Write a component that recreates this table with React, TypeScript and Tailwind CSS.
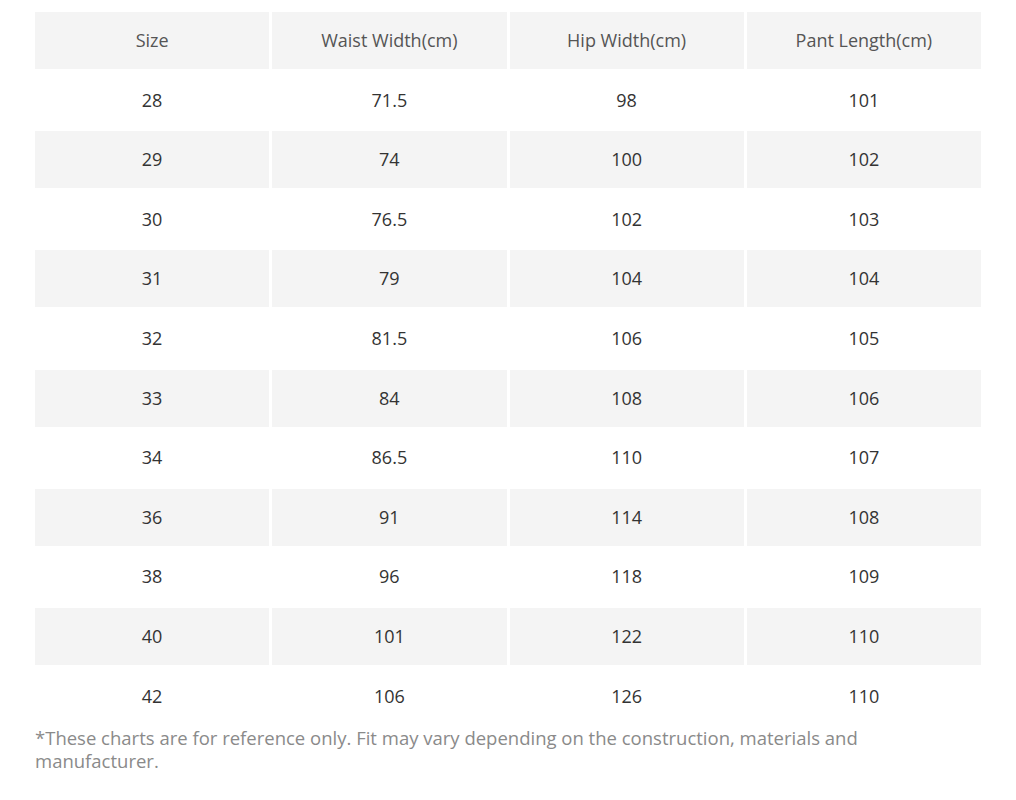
const headers = ["Size", "Waist Width(cm)", "Hip Width(cm)", "Pant Length(cm)"];

const rows = [
  ["28", "71.5", "98", "101"],
  ["29", "74", "100", "102"],
  ["30", "76.5", "102", "103"],
  ["31", "79", "104", "104"],
  ["32", "81.5", "106", "105"],
  ["33", "84", "108", "106"],
  ["34", "86.5", "110", "107"],
  ["36", "91", "114", "108"],
  ["38", "96", "118", "109"],
  ["40", "101", "122", "110"],
  ["42", "106", "126", "110"],
];

export default function App() {
  return (
    <div className="min-h-[800px] w-[1016px] bg-white pl-[35px] pt-[12px] font-['Open_Sans',sans-serif]">
      <div className="flex w-[946px] flex-col gap-[2.6px]">
        <div className="grid h-[57px] grid-cols-4 gap-[3px]">
          {headers.map((h) => (
            <div
              key={h}
              className="flex items-center justify-center bg-[#f4f4f4] text-[18px] text-[#555]"
            >
              {h}
            </div>
          ))}
        </div>
        {rows.map((r, i) => (
          <div key={r[0]} className="grid h-[57px] grid-cols-4 gap-[3px]">
            {r.map((c, j) => (
              <div
                key={j}
                className={`flex items-center justify-center text-[18px] text-[#333] ${
                  i % 2 === 1 ? "bg-[#f4f4f4]" : "bg-white"
                }`}
              >
                {c}
              </div>
            ))}
          </div>
        ))}
      </div>
      <p className="mt-[1px] w-[880px] text-[18.5px] leading-[23px] text-[#8a8a8a]">
        *These charts are for reference only. Fit may vary depending on the
        construction, materials and manufacturer.
      </p>
    </div>
  );
}
